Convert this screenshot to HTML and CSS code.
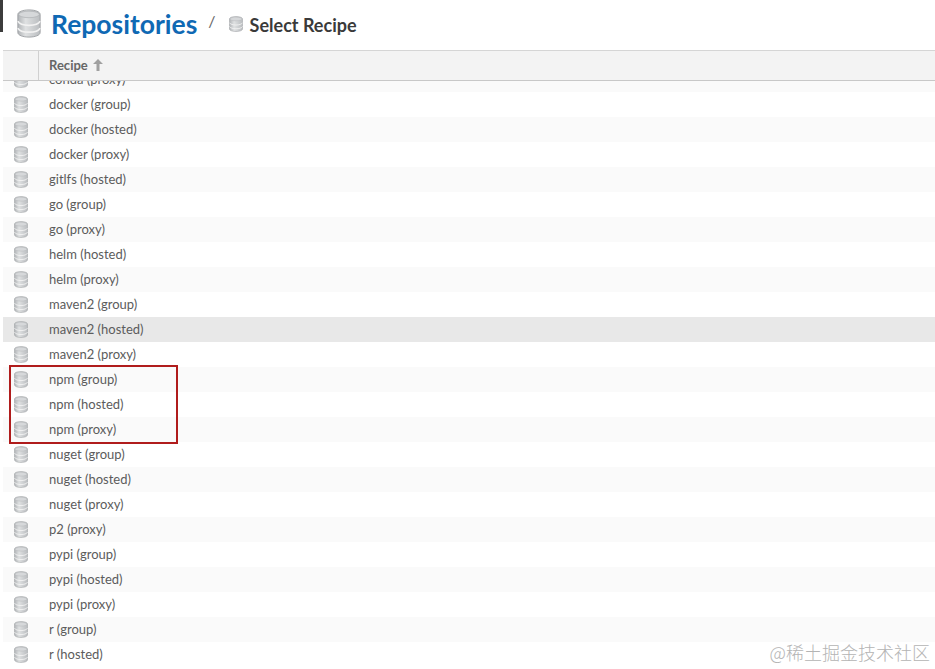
FILE: index.html
```html
<!DOCTYPE html>
<html>

<head>
  <meta charset="UTF-8">
  <title>Repositories</title>
  <link rel="stylesheet" href="styles.css">
</head>

<body>
<svg class="defs" width="0" height="0">
  <defs>
    <linearGradient id="dbfill" x1="0" y1="0" x2="1" y2="0">
      <stop offset="0" stop-color="#b0b3b6"/>
      <stop offset="0.35" stop-color="#dfe1e2"/>
      <stop offset="1" stop-color="#babdc0"/>
    </linearGradient>
    <symbol id="db" viewBox="0 0 28 32" preserveAspectRatio="none">
      <path d="M1 6C1 3 7 1 14 1s13 2 13 5v20c0 3-6 5-13 5S1 29 1 26z" fill="url(#dbfill)" stroke="#9a9da0" stroke-width="1"/>
      <ellipse cx="14" cy="6" rx="12" ry="3.600" fill="#d6d8da" stroke="#aeb1b3" stroke-width="0.800"/>
      <path d="M1 13.500c1.500 3 7 4.500 13 4.500s11.500-1.500 13-4.500" fill="none" stroke="#f2f2f2" stroke-width="1.800"/>
      <path d="M1 21c1.500 3 7 4.500 13 4.500S25.500 24 27 21" fill="none" stroke="#f2f2f2" stroke-width="1.800"/>
    </symbol>
  </defs>
</svg>

<div class="page">
  <div class="corner"></div>
  <header class="head">
    <svg class="ico-big"><use href="#db"/></svg>
    <h1>Repositories</h1>
    <span class="slash">/</span>
    <svg class="ico-mid"><use href="#db"/></svg>
    <h2>Select Recipe</h2>
  </header>

  <div class="grid-head">
    <div class="cell-ico"></div>
    <div class="cell-name">Recipe
      <svg class="arrow" viewBox="0 0 10 12"><path d="M5 0L10 5H6.500V12h-3V5H0z"/></svg>
    </div>
  </div>

  <div class="list">
    <div class="scroller">
      <div class="row"><svg class="ico"><use href="#db"/></svg><span>conda (proxy)</span></div>
      <div class="row"><svg class="ico"><use href="#db"/></svg><span>docker (group)</span></div>
      <div class="row"><svg class="ico"><use href="#db"/></svg><span>docker (hosted)</span></div>
      <div class="row"><svg class="ico"><use href="#db"/></svg><span>docker (proxy)</span></div>
      <div class="row"><svg class="ico"><use href="#db"/></svg><span>gitlfs (hosted)</span></div>
      <div class="row"><svg class="ico"><use href="#db"/></svg><span>go (group)</span></div>
      <div class="row"><svg class="ico"><use href="#db"/></svg><span>go (proxy)</span></div>
      <div class="row"><svg class="ico"><use href="#db"/></svg><span>helm (hosted)</span></div>
      <div class="row"><svg class="ico"><use href="#db"/></svg><span>helm (proxy)</span></div>
      <div class="row"><svg class="ico"><use href="#db"/></svg><span>maven2 (group)</span></div>
      <div class="row hover"><svg class="ico"><use href="#db"/></svg><span>maven2 (hosted)</span></div>
      <div class="row"><svg class="ico"><use href="#db"/></svg><span>maven2 (proxy)</span></div>
      <div class="row"><svg class="ico"><use href="#db"/></svg><span>npm (group)</span></div>
      <div class="row"><svg class="ico"><use href="#db"/></svg><span>npm (hosted)</span></div>
      <div class="row"><svg class="ico"><use href="#db"/></svg><span>npm (proxy)</span></div>
      <div class="row"><svg class="ico"><use href="#db"/></svg><span>nuget (group)</span></div>
      <div class="row"><svg class="ico"><use href="#db"/></svg><span>nuget (hosted)</span></div>
      <div class="row"><svg class="ico"><use href="#db"/></svg><span>nuget (proxy)</span></div>
      <div class="row"><svg class="ico"><use href="#db"/></svg><span>p2 (proxy)</span></div>
      <div class="row"><svg class="ico"><use href="#db"/></svg><span>pypi (group)</span></div>
      <div class="row"><svg class="ico"><use href="#db"/></svg><span>pypi (hosted)</span></div>
      <div class="row"><svg class="ico"><use href="#db"/></svg><span>pypi (proxy)</span></div>
      <div class="row"><svg class="ico"><use href="#db"/></svg><span>r (group)</span></div>
      <div class="row"><svg class="ico"><use href="#db"/></svg><span>r (hosted)</span></div>
    </div>
  </div>

  <div class="redbox"></div>
  <div class="mark">@稀土掘金技术社区</div>
</div>
</body>

</html>
```

FILE: styles.css
```css
html, body {
  margin: 0;
  padding: 0;
  background: #fff;
}
body {
  font-family: "Lato", "Liberation Sans", sans-serif;
  color: #4a4a4a;
}
.defs {
  display: block;
  height: 0;
}
.page {
  position: relative;
  width: 935px;
  height: 669px;
  overflow: hidden;
}
.corner {
  position: absolute;
  left: 0;
  top: 0;
  width: 3px;
  height: 32px;
  background: #3c3c3c;
}

/* title bar */
.head {
  height: 50px;
  box-sizing: border-box;
  display: flex;
  align-items: center;
  padding: 0 0 3px 17px;
}
.ico-big {
  width: 24px;
  height: 29px;
  margin-right: 10px;
}
.head h1 {
  margin: 0;
  font-size: 26.500px;
  font-weight: 700;
  color: #0f69b4;
}
.slash {
  margin: 0 13px 6px 11px;
  font-size: 16px;
  color: #666;
}
.ico-mid {
  width: 14px;
  height: 16px;
  margin: 1px 7px 0 0;
}
.head h2 {
  margin: 2px 0 0;
  font-size: 18px;
  font-weight: 700;
  color: #3a3a3a;
}

/* grid header */
.grid-head {
  display: flex;
  height: 31px;
  box-sizing: border-box;
  margin-left: 3px;
  background: #f3f3f3;
  border-top: 1px solid #d5d5d5;
  border-bottom: 1px solid #c8c8c8;
}
.cell-ico {
  width: 35px;
  border-right: 1px solid #d0d0d0;
}
.cell-name {
  display: flex;
  align-items: center;
  gap: 5px;
  padding: 0 0 2px 10px;
  font-size: 13px;
  font-weight: 700;
  color: #666;
}
.arrow {
  width: 10px;
  height: 12px;
  fill: #a0a0a0;
}

/* rows */
.list {
  height: 588px;
  margin-left: 3px;
  overflow: hidden;
}
.scroller {
  margin-top: -14px;
}
.row {
  display: flex;
  align-items: center;
  height: 25px;
  font-size: 13px;
  color: #5c5c5c;
}
.row:nth-child(odd) {
  background: #fafafa;
}
.row.hover {
  background: #e8e8e8;
}
.ico {
  width: 14px;
  height: 17px;
  margin: 0 21px 0 11px;
  flex: none;
}
.row span {
  padding-bottom: 2px;
  white-space: nowrap;
}

/* annotation over the list */
.redbox {
  position: absolute;
  left: 9px;
  top: 365px;
  width: 165px;
  height: 75px;
  border: 2px solid #b01c1c;
}
.mark {
  position: absolute;
  right: 5px;
  top: 639px;
  font-family: "Noto Sans CJK SC", sans-serif;
  font-size: 18px;
  font-weight: 300;
  line-height: 26px;
  color: #b4b4b4;
  white-space: nowrap;
}
```
